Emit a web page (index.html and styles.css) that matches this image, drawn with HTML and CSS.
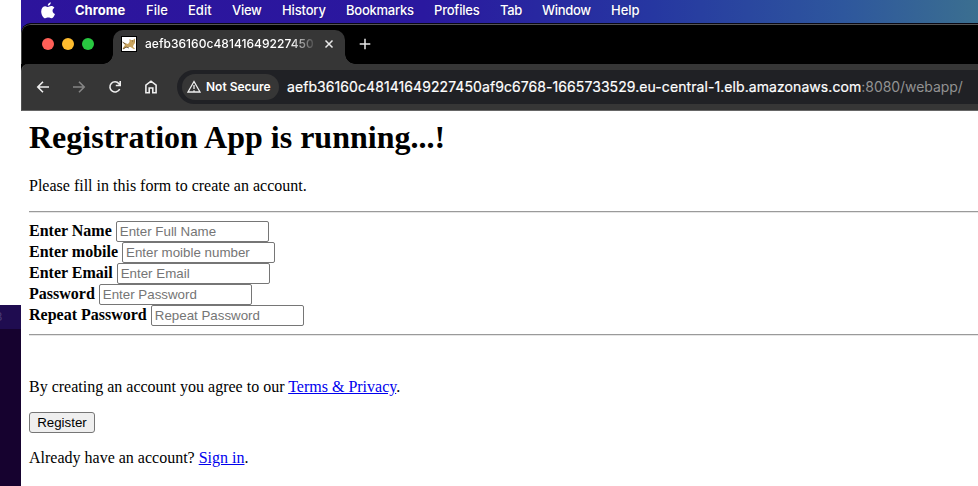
FILE: index.html
```html
<!DOCTYPE html>
<html lang="en">
<head>
<meta charset="utf-8">
<title>Registration App</title>
<link rel="stylesheet" href="styles.css">
</head>
<body>
<div class="desktop">
  <aside class="side"><div class="side-top"></div><div class="side-head">3</div><div class="side-body"></div></aside>
  <div class="screen">
    <nav class="menubar">
      <svg class="apple" viewBox="0 0 14 17"><path d="M9.8 0.3c.1 1.8-1.3 3.5-3 3.5C6.6 2.100 8.100.5 9.800.3ZM7 5c.7 0 1.700-.9 3.200-.9 1.300 0 2.500.6 3.200 1.600-2.700 1.600-2.300 5.100.6 6.200-.7 1.900-2.100 4.400-3.600 4.400-1.100 0-1.700-.7-3.100-.7-1.400 0-2 .7-3.100.7C2.500 16.300.2 12.800.2 9.400c0-3.400 2.100-5.200 4.100-5.200C5.500 4.200 6.300 5 7 5Z"/></svg>
      <span class="chrome">Chrome</span><span class="file">File</span><span class="edit">Edit</span><span class="view">View</span><span class="history">History</span><span class="bookmarks">Bookmarks</span><span class="profiles">Profiles</span><span class="tabm">Tab</span><span class="windowm">Window</span><span>Help</span>
    </nav>
    <div class="window">
      <div class="tabstrip">
        <div class="lights"><i class="red"></i><i class="yellow"></i><i class="green"></i></div>
        <div class="tab">
          <svg class="favicon" viewBox="0 0 16 16"><path fill="#000" d="M0 0h16v16H0z"/><path fill="#fff" d="M1 1h14v14H1z"/><path fill="#c9a45e" d="m8.500 3 1.500 1h2L14 2.500V7l-1.500 2-.5 2 2 1.500-1 .7-3.500-2.200L6 11l-3 2-1.500-.5L4 9 2 6.500 7 8l1.500-2z"/><path d="m1.500 6 3 2M2 13l3-2 3 1m3-7h.8m1.200 0h.5" fill="none" stroke="#574325" stroke-width=".8"/></svg>
          <span class="title">aefb36160c48141649227450</span>
          <svg class="close" viewBox="0 0 10 10"><path d="m1.500 1.500 7 7m0-7-7 7"/></svg>
        </div>
        <svg class="plus" viewBox="0 0 12 12"><path d="M6 .7v10.600M.7 6h10.600"/></svg>
      </div>
      <div class="toolbar">
        <svg class="icon" viewBox="0 0 16 16"><path d="M14 8H3m5-5.200L2.800 8 8 13.200"/></svg>
        <svg class="icon dim" viewBox="0 0 16 16"><path d="M2 8h11M8 2.800 13.200 8 8 13.200"/></svg>
        <svg class="icon" viewBox="0 0 16 16"><path d="M12.700 10A5.100 5.100 0 1 1 12 4.700L13 6M13.200 2v4.500H8.800"/></svg>
        <svg class="icon" viewBox="0 0 16 16"><path d="M2.900 6.200 8 2.200l5.100 4v7.600H9.800V9H6.200v4.800H2.900z"/></svg>
        <div class="omnibox">
          <div class="chip"><svg viewBox="0 0 14 13"><path d="M7 1.500 13 12H1zM7 5v4m0 1.200v1.200"/></svg><span>Not Secure</span></div>
          <span class="url">aefb36160c48141649227450af9c6768-1665733529.eu-central-1.elb.amazonaws.com</span><span class="path">:8080/webapp/</span>
        </div>
      </div>
      <main class="page">
        <h1>Registration App is running...!</h1>
        <p>Please fill in this form to create an account.</p>
        <hr>
        <form>
          <div class="row"><label for="name">Enter Name</label><input id="name" placeholder="Enter Full Name"></div>
          <div class="row"><label for="mobile">Enter mobile</label><input id="mobile" placeholder="Enter moible number"></div>
          <div class="row"><label for="email">Enter Email</label><input id="email" placeholder="Enter Email"></div>
          <div class="row"><label for="psw">Password</label><input id="psw" type="password" placeholder="Enter Password"></div>
          <div class="row"><label for="repeat">Repeat Password</label><input id="repeat" type="password" placeholder="Repeat Password"></div>
          <hr class="end">
          <p class="terms">By creating an account you agree to our <a href="#">Terms &amp; Privacy</a>.</p>
          <button type="button">Register</button>
        </form>
        <p class="signin">Already have an account? <a href="#">Sign in</a>.</p>
      </main>
    </div>
  </div>
</div>
</body>
</html>
```
FILE: styles.css
```css
* { box-sizing: border-box; }
body { margin: 0; background: #fff; overflow: hidden; }
svg { display: block; flex: none; }
.desktop { display: flex; width: 978px; height: 486px; overflow: hidden; }
.side { width: 21px; flex: none; }
.side-top { height: 305px; }
.side-head { height: 24px; background: #1f0c50; color: #493a75; font: 12px/24px Inter, sans-serif; text-indent: -5px; overflow: hidden; }
.side-body { height: 157px; background: #16022f; }
.screen { width: 957px; flex: none; background: #2a17a0; }
.menubar { display: flex; height: 23px; padding-left: 20px; background: linear-gradient(90deg, #2d149c 0, #2a189f 42%, #2637a1 66%, #2e579d 86%, #3b6f90 100%); color: #fff; font: 500 13px/20px Inter, sans-serif; white-space: nowrap; text-shadow: 0 1px 2px rgba(0,0,0,.2); }
.menubar span { flex: none; }
.apple { width: 14px; height: 17px; margin: 2px 20px 0 0; fill: #fff; }
.chrome { width: 71px; font-weight: 700; }
.file { width: 42px; }
.edit { width: 44px; }
.view { width: 50px; letter-spacing: -.3px; }
.history { width: 64px; letter-spacing: -.15px; }
.bookmarks { width: 88px; letter-spacing: -.25px; }
.profiles { width: 66px; letter-spacing: -.2px; }
.tabm { width: 42px; letter-spacing: -.3px; }
.windowm { width: 69px; letter-spacing: -.3px; }
.window { height: 463px; border-top: 1px solid #090712; border-radius: 10px 0 0 0; overflow: hidden; background: #000; }
.tabstrip { display: flex; height: 40px; border-top: 1px solid #555; border-left: 1px solid #444; border-radius: 9px 0 0 0; background: #000; }
.lights { display: flex; gap: 8px; padding: 13px 0 0 20px; width: 91px; flex: none; }
.lights i { width: 12px; height: 12px; border-radius: 50%; }
.red { background: #ff5f57; }
.yellow { background: #febc2e; }
.green { background: #28c840; }
.tab { position: relative; display: flex; align-items: center; width: 232px; height: 34px; margin-top: 5px; padding: 0 0 6px 8px; border-radius: 10px 10px 0 0; background: #363636; }
.tab::before, .tab::after { content: ""; position: absolute; bottom: 0; width: 10px; height: 10px; }
.tab::before { left: -10px; background: radial-gradient(circle at 0 0, transparent 9.500px, #363636 10px); }
.tab::after { right: -10px; background: radial-gradient(circle at 100% 0, transparent 9.500px, #363636 10px); }
.favicon { width: 16px; height: 16px; }
.title { width: 169px; margin-left: 8px; color: #fff; font: 500 12px/18px Inter, sans-serif; letter-spacing: .03px; white-space: nowrap; -webkit-mask-image: linear-gradient(90deg, #000 145px, transparent 172px); mask-image: linear-gradient(90deg, #000 145px, transparent 172px); }
.close { width: 10px; height: 10px; margin-left: 10px; }
.close path, .plus path { stroke: #e8e8e8; stroke-width: 1.5; fill: none; }
.plus { width: 12px; height: 12px; margin: 13px 0 0 14px; }
.toolbar { display: flex; align-items: center; gap: 20px; height: 47px; padding: 0 0 1px 13px; border-left: 1px solid #505050; border-bottom: 1px solid #666; background: #363636; border-radius: 7px 0 0 0; }
.icon { width: 16px; height: 16px; fill: none; stroke: #eee; stroke-width: 1.6; }
.dim { stroke: #858585; }
.omnibox { display: flex; align-items: center; width: 820px; height: 34px; flex: none; margin-left: -2px; padding-left: 5px; border-radius: 17px 0 0 17px; background: #202125; color: #fff; font: 400 14px/20px Inter, sans-serif; white-space: nowrap; }
.chip { display: flex; align-items: center; width: 97px; height: 26px; flex: none; padding-left: 5px; margin-right: 8px; border-radius: 13px; background: #363636; font-size: 12px; font-weight: 600; }
.chip svg { width: 14px; height: 13px; margin-right: 5px; fill: none; stroke: #eee; stroke-width: 1.3; }
.url { letter-spacing: .075px; -webkit-text-stroke: .2px #fff; }
.path { color: #929292; letter-spacing: -.05px; }
.page { height: 376px; padding: 8px 0 0 8px; background: #fff; color: #000; font: 16px/18px "Liberation Serif", "Times New Roman", serif; }
h1 { margin: 0; font-size: 32px; line-height: 37px; white-space: nowrap; }
p { margin: 21px 0 0; }
hr { height: 2px; margin: 16px 0 8px; border: 0; border-top: 1px solid #9a9a9a; border-bottom: 1px solid #e6e6e6; }
.row { display: flex; height: 21px; font-weight: 700; line-height: 20px; white-space: pre; }
.row input { width: 153px; height: 21px; margin-left: 4px; padding: 1px 2px 1px 3px; border: 1px solid #767676; border-radius: 2px; font: 13.333px "Liberation Sans", Arial, sans-serif; background: #fff; }
.row input::placeholder { color: #757575; }
.end { margin: 8px 0 0; }
.terms { margin: 42px 0 16px; }
button { display: block; width: 66px; height: 21px; padding: 0; border: 1px solid #767676; border-radius: 3px; background: #efefef; color: #000; font: 13.333px "Liberation Sans", Arial, sans-serif; }
.signin { margin: 16px 0 0; }
a { color: #0000ee; }
```
